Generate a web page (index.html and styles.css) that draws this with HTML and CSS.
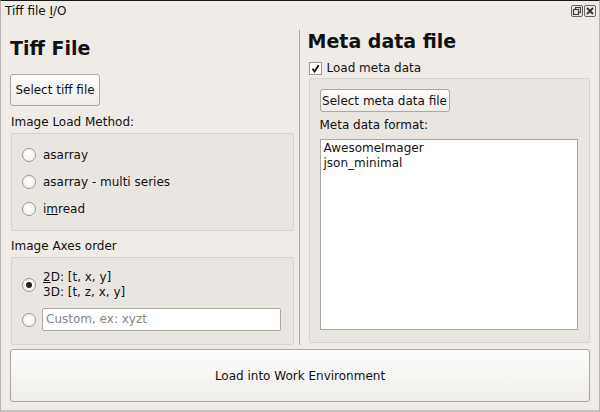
FILE: index.html
```html
<!DOCTYPE html>
<html>
<head>
<meta charset="utf-8">
<link rel="stylesheet" href="styles.css">
</head>
<body>
<div class="window">
  <div class="titlebar">
    <span class="title">Tiff file <u>I</u>/O</span>
    <div class="tb-buttons">
      <span class="tb-btn">
        <svg width="10" height="10" viewBox="0 0 10 10"><rect x="3.5" y="1.5" width="5" height="5" fill="none" stroke="#444" stroke-width="1.2"/><rect x="1.5" y="3.5" width="5" height="5" fill="#efebe7" stroke="#444" stroke-width="1.2"/></svg>
      </span>
      <span class="tb-btn">
        <svg width="10" height="10" viewBox="0 0 10 10"><path d="M2 2 L8 8 M8 2 L2 8" stroke="#333" stroke-width="1.8"/></svg>
      </span>
    </div>
  </div>
  <div class="content">
    <div class="columns">
      <div class="col left">
        <h1 class="heading">Tiff File</h1>
        <button class="btn btn-tiff">Select tiff file</button>
        <div class="label lbl-method">Image Load Method:</div>
        <div class="group g-method">
          <div class="radio-row"><span class="radio"></span><span>asarray</span></div>
          <div class="radio-row"><span class="radio"></span><span>asarray - multi series</span></div>
          <div class="radio-row"><span class="radio"></span><span>i<u>m</u>read</span></div>
        </div>
        <div class="label lbl-axes">Image Axes order</div>
        <div class="group g-axes">
          <div class="radio-row two"><span class="radio checked"></span><span class="two-lines"><u>2</u>D: [t, x, y]<br>3D: [t, z, x, y]</span></div>
          <div class="radio-row custom"><span class="radio"></span><span class="input">Custom, ex: xyzt</span></div>
        </div>
      </div>
      <div class="sep"></div>
      <div class="col right">
        <h1 class="heading">Meta data file</h1>
        <div class="check-row"><span class="checkbox">
          <svg width="9" height="9" viewBox="0 0 9 9"><path d="M1.5 4.8 L3.6 7.5 L7.6 1.2" fill="none" stroke="#111" stroke-width="1.8"/></svg>
        </span><span>Load meta data</span></div>
        <div class="group g-meta">
          <button class="btn btn-meta">Select meta data file</button>
          <div class="label lbl-format">Meta data format:</div>
          <div class="list">
            <div>AwesomeImager</div>
            <div>json_minimal</div>
          </div>
        </div>
      </div>
    </div>
    <button class="btn btn-load">Load into Work Environment</button>
  </div>
</div>
</body>
</html>
```

FILE: styles.css
```css
* { box-sizing: border-box; }
html, body { margin: 0; padding: 0; }
body {
  width: 600px;
  height: 412px;
  background: #efebe7;
  font-family: "DejaVu Sans", sans-serif;
  font-size: 12px;
  color: #111;
  overflow: hidden;
}
.window {
  width: 600px;
  height: 412px;
  border-top: 1px solid #1a1a1a;
  border-left: 1px solid #b8b4b0;
  border-right: 1px solid #b8b4b0;
  border-bottom: 2px solid #c8c4c0;
  background: #efebe7;
  display: flex;
  flex-direction: column;
}
.titlebar {
  height: 20px;
  display: flex;
  align-items: center;
  justify-content: space-between;
  padding: 0 3px 0 4px;
}
.title { font-size: 12px; line-height: 14px; }
.title u { text-decoration-thickness: 1px; text-underline-offset: 2px; }
.tb-buttons { display: flex; gap: 1px; }
.tb-btn {
  width: 12px; height: 12px;
  border: 1px solid #666;
  border-radius: 2px;
  display: flex; align-items: center; justify-content: center;
  background: #efebe7;
}
.tb-btn svg { display: block; }
.content {
  flex: 1;
  display: flex;
  flex-direction: column;
  padding: 0 9px 0 9px;
}
.columns {
  display: flex;
  height: 327px;
}
.col { display: flex; flex-direction: column; }
.left { width: 284px; }
.sep {
  width: 1px;
  background: #aaa6a2;
  margin: 9px 0 0 5px;
  height: 315px;
}
.right { width: 291px; padding-left: 8px; }
.heading {
  margin: 0;
  font-size: 19px;
  font-weight: bold;
  line-height: 22px;
  padding-left: 0;
}
.left .heading { margin-top: 16px; }
.right .heading { margin-top: 9px; }
.btn {
  font-family: "DejaVu Sans", sans-serif;
  font-size: 12px;
  color: #111;
  background: linear-gradient(#fdfdfc, #efedea);
  border: 1px solid #aaa6a2;
  border-radius: 3px;
  padding: 0;
  margin: 0;
}
.btn-tiff {
  width: 90px; height: 32px;
  margin-top: 15px;
}
.label { line-height: 15px; padding-left: 1px; }
.lbl-method { margin-top: 9px; }
.group {
  background: #e9e6e2;
  border: 1px solid #d6d2cd;
  border-radius: 2px;
  margin-left: 1px;
}
.g-method {
  margin-top: 3px;
  height: 98px;
  padding-top: 13px;
  display: flex; flex-direction: column; gap: 11px;
}
.radio-row {
  display: flex;
  align-items: center;
  padding-left: 10px;
  gap: 7px;
  line-height: 16px;
}
.radio {
  width: 14px; height: 14px;
  border-radius: 50%;
  border: 1px solid #9c9894;
  background: radial-gradient(circle at 50% 40%, #ffffff, #f1efec);
  display: inline-block;
  flex: none;
  position: relative;
}
.radio.checked::after {
  content: "";
  position: absolute;
  left: 3px; top: 3px;
  width: 6px; height: 6px;
  border-radius: 50%;
  background: #222;
}
.lbl-axes { margin-top: 8px; }
.g-axes {
  margin-top: 3px;
  height: 88px;
  padding-top: 12px;
  display: flex; flex-direction: column; gap: 8px;
}
.two-lines { line-height: 15px; }
.custom { gap: 6px; }
.input {
  width: 239px; height: 23px;
  background: #fff;
  border: 1px solid #aaa6a2;
  border-radius: 2px;
  color: #8a8783;
  padding-left: 3px;
  line-height: 21px;
}
.check-row {
  display: flex; align-items: center; gap: 5px;
  margin-top: 9px;
  line-height: 15px;
}
.checkbox {
  width: 13px; height: 13px;
  border: 1px solid #9c9894;
  background: #fff;
  display: flex; align-items: center; justify-content: center;
  margin-left: 1px;
}
.checkbox svg { display: block; }
.g-meta {
  margin-top: 2px;
  height: 265px;
  padding: 10px 11px 12px 10px;
  display: flex; flex-direction: column;
}
.btn-meta {
  width: 130px; height: 23px;
  align-self: flex-start;
}
.lbl-format { margin-top: 6px; padding-left: 0; }
.list {
  margin-top: 6px;
  flex: 1;
  background: #fff;
  border: 1px solid #aaa6a2;
  padding: 1px 3px;
  line-height: 15px;
}
.btn-load {
  height: 53px;
  width: 580px;
  margin-top: 1px;
}
```
